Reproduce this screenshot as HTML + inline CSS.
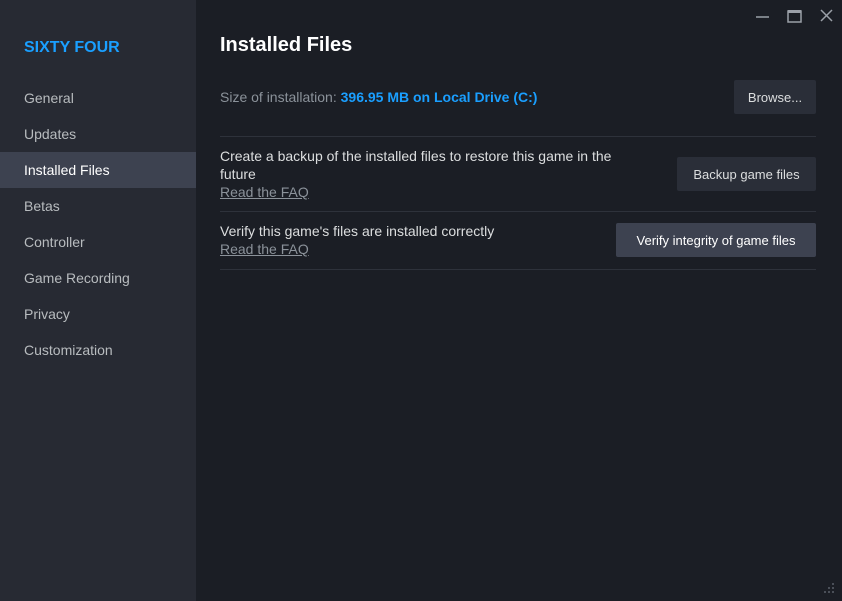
<!DOCTYPE html><html><head><style>
*{margin:0;padding:0;box-sizing:border-box}
body{width:842px;height:601px;background:#1b1e25;font-family:"Liberation Sans",sans-serif;position:relative;overflow:hidden;color:#dcdedf}
.side{position:absolute;left:0;top:0;width:196px;height:601px;background:#272a33}
.title{position:absolute;left:24px;top:39px;color:#1a9fff;font-weight:bold;font-size:16px}
.nav{position:absolute;left:0;width:196px;height:36px;line-height:36px;padding-left:24px;font-size:14px;color:#b8bcbf}
.nav.sel{background:#3d4250;color:#fff}
.a{position:absolute}
h1{position:absolute;left:220px;top:34px;font-size:20px;color:#fff;font-weight:bold}
.txt{font-size:14px;color:#dcdedf}
.btn{position:absolute;background:#2a2e38;color:#dcdedf;font-size:13px;text-align:center;border-radius:2px;height:34px;line-height:35px}
.hr{position:absolute;left:220px;width:596px;height:1px;background:#2e323b}
u{color:#8b929a;text-decoration:underline}
</style></head><body>
<div class="side">
<div class="title">SIXTY FOUR</div>
<div class="nav" style="top:80px">General</div>
<div class="nav" style="top:116px">Updates</div>
<div class="nav sel" style="top:152px">Installed Files</div>
<div class="nav" style="top:188px">Betas</div>
<div class="nav" style="top:224px">Controller</div>
<div class="nav" style="top:260px">Game Recording</div>
<div class="nav" style="top:296px">Privacy</div>
<div class="nav" style="top:332px">Customization</div>
</div>
<h1>Installed Files</h1>
<div class="a txt" style="left:220px;top:89px;color:#8b929a">Size of installation: <b style="color:#1a9fff">396.95 MB on Local Drive (C:)</b></div>
<div class="btn" style="left:734px;top:80px;width:82px">Browse...</div>
<div class="hr" style="top:136px"></div>
<div class="a txt" style="left:220px;top:147px;width:420px;line-height:18px">Create a backup of the installed files to restore this game in the future<br><u>Read the FAQ</u></div>
<div class="btn" style="left:677px;top:157px;width:139px">Backup game files</div>
<div class="hr" style="top:211px"></div>
<div class="a txt" style="left:220px;top:222px;line-height:18px">Verify this game's files are installed correctly<br><u>Read the FAQ</u></div>
<div class="btn" style="left:616px;top:223px;width:200px;background:#3d4250;color:#fff">Verify integrity of game files</div>
<div class="hr" style="top:269px"></div>
<svg class="a" style="left:750px;top:6px" width="90" height="20" fill="none" stroke="#9ba0a8" stroke-width="1.5">
<path d="M6 11h13"/><rect x="38" y="5" width="13" height="11"/><path d="M38 5.5h13" stroke-width="3"/><path d="M71 4l11 11M82 4L71 15"/></svg>
<svg class="a" style="left:822px;top:581px" width="16" height="16" fill="#4a4f58"><rect x="10" y="2" width="2" height="2"/><rect x="6" y="6" width="2" height="2"/><rect x="10" y="6" width="2" height="2"/><rect x="2" y="10" width="2" height="2"/><rect x="6" y="10" width="2" height="2"/><rect x="10" y="10" width="2" height="2"/></svg>
</body></html>
